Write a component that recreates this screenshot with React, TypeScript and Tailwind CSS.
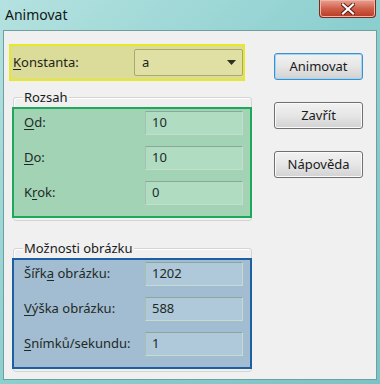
const font = "font-['Segoe_UI','Noto_Sans',sans-serif]";

function Key({ children }: { children: string }) {
  return <span className="underline underline-offset-2">{children}</span>;
}

function Field({ label, value, tint }: { label: React.ReactNode; value: string; tint: string }) {
  return (
    <div className="flex items-center h-[24px]">
      <div className="w-[131px] pl-[10px] text-[13px] text-[#1e2a26]">{label}</div>
      <div
        className={`w-[98px] h-[24px] flex items-center pl-[6px] text-[13px] text-[#1e2a26] border border-t-[#8da69a] border-l-[#a8c0b3] border-r-[#c6dccf] border-b-[#c6dccf] ${tint}`}
      >
        {value}
      </div>
    </div>
  );
}

function Button({ children, focused }: { children: React.ReactNode; focused?: boolean }) {
  return (
    <div
      className={`w-[89px] h-[27px] flex items-center justify-center rounded-[3px] text-[13px] text-[#1a1a1a] bg-gradient-to-b from-[#f2f2f2] via-[#e6e6e6] to-[#d2d2d2] border ${
        focused ? "border-[#3c8fd0] shadow-[inset_0_0_0_1px_#9fd6f0]" : "border-[#707070] shadow-[inset_0_0_0_1px_#fafafa]"
      }`}
    >
      {children}
    </div>
  );
}

export default function App() {
  return (
    <div className={`w-[380px] h-[384px] bg-gradient-to-br from-[#b4e2e0] via-[#8ccfcf] to-[#7cc3c6] flex flex-col ${font}`}>
      {/* title bar */}
      <div className="h-[30px] flex items-start justify-between shrink-0">
        <div className="pl-[5px] pt-[4px] text-[14px] text-[#101818]">Animovat</div>
        <div className="mr-[4px] w-[57px] h-[18px] rounded-b-[4px] border border-t-0 border-[#7a2a20] bg-gradient-to-b from-[#e8a292] via-[#d0604a] to-[#b83a22] flex items-center justify-center shadow-[inset_0_0_0_1px_#f2b4a6]">
          <svg width="14" height="12" viewBox="0 0 14 12">
            <path d="M2 1.5 L12 10.5 M12 1.5 L2 10.5" stroke="#5a1a10" strokeWidth="4" strokeLinecap="square" />
            <path d="M2 1.5 L12 10.5 M12 1.5 L2 10.5" stroke="#ffffff" strokeWidth="2.2" strokeLinecap="square" />
          </svg>
        </div>
      </div>

      {/* client area */}
      <div className="mx-[3px] mb-[4px] flex-1 border border-[#6f9ea0] bg-[#f0f0f0] flex">
        <div className="w-[252px] pl-[5px] pt-[13px] flex flex-col">
          {/* Konstanta */}
          <div className="w-[236px] h-[37px] border-[2px] border-[#e8e82a] bg-[#dcdc9a] flex items-center">
            <div className="w-[123px] pl-[2px] text-[13px] text-[#1e2418]">
              <Key>K</Key>onstanta:
            </div>
            <div className="w-[109px] h-[27px] rounded-[2px] border border-[#a8a870] bg-[#e0e0a4] flex items-center justify-between pl-[7px] pr-[6px] text-[13px] text-[#1e2418]">
              <span>a</span>
              <svg width="9" height="5" viewBox="0 0 9 5">
                <path d="M0 0 H9 L4.5 5 Z" fill="#303020" />
              </svg>
            </div>
          </div>

          {/* Rozsah */}
          <div className="mt-[16px] ml-[4px] w-[239px] border border-[#d4d4d4] rounded-[3px] h-[124px] relative shadow-[inset_1px_1px_0_#ffffff]">
            <div className="absolute -top-[11px] left-[9px] px-[1px] bg-[#f0f0f0] text-[13px] leading-[20px] text-[#1a1a1a]">Rozsah</div>
            <div className="mt-[9px] -ml-[2px] w-[240px] h-[111px] border-[2px] border-[#1ea85a] bg-[#a2d3b5] flex flex-col gap-[11px] pt-[2px]">
              <Field label={<><Key>O</Key>d:</>} value="10" tint="bg-[#b0dcc2]" />
              <Field label={<><Key>D</Key>o:</>} value="10" tint="bg-[#b0dcc2]" />
              <Field label={<>K<Key>r</Key>ok:</>} value="0" tint="bg-[#b0dcc2]" />
            </div>
          </div>

          {/* Možnosti obrázku */}
          <div className="mt-[27px] ml-[4px] w-[239px] border border-[#d4d4d4] rounded-[3px] h-[124px] relative shadow-[inset_1px_1px_0_#ffffff]">
            <div className="absolute -top-[11px] left-[9px] px-[1px] bg-[#f0f0f0] text-[13px] leading-[20px] text-[#1a1a1a]">Možnosti obrázku</div>
            <div className="mt-[9px] -ml-[2px] w-[240px] h-[111px] border-[2px] border-[#1d5fa3] bg-[#a2bdd2] flex flex-col gap-[11px] pt-[2px]">
              <Field label={<>Šířk<Key>a</Key> obrázku:</>} value="1202" tint="bg-[#afc8da]" />
              <Field label={<><Key>V</Key>ýška obrázku:</>} value="588" tint="bg-[#afc8da]" />
              <Field label={<><Key>S</Key>nímků/sekundu:</>} value="1" tint="bg-[#afc8da]" />
            </div>
          </div>
        </div>

        <div className="ml-[18px] pt-[22px] flex flex-col gap-[22px]">
          <Button focused>Animovat</Button>
          <Button>Zavřít</Button>
          <Button>Nápověda</Button>
        </div>
      </div>
    </div>
  );
}
